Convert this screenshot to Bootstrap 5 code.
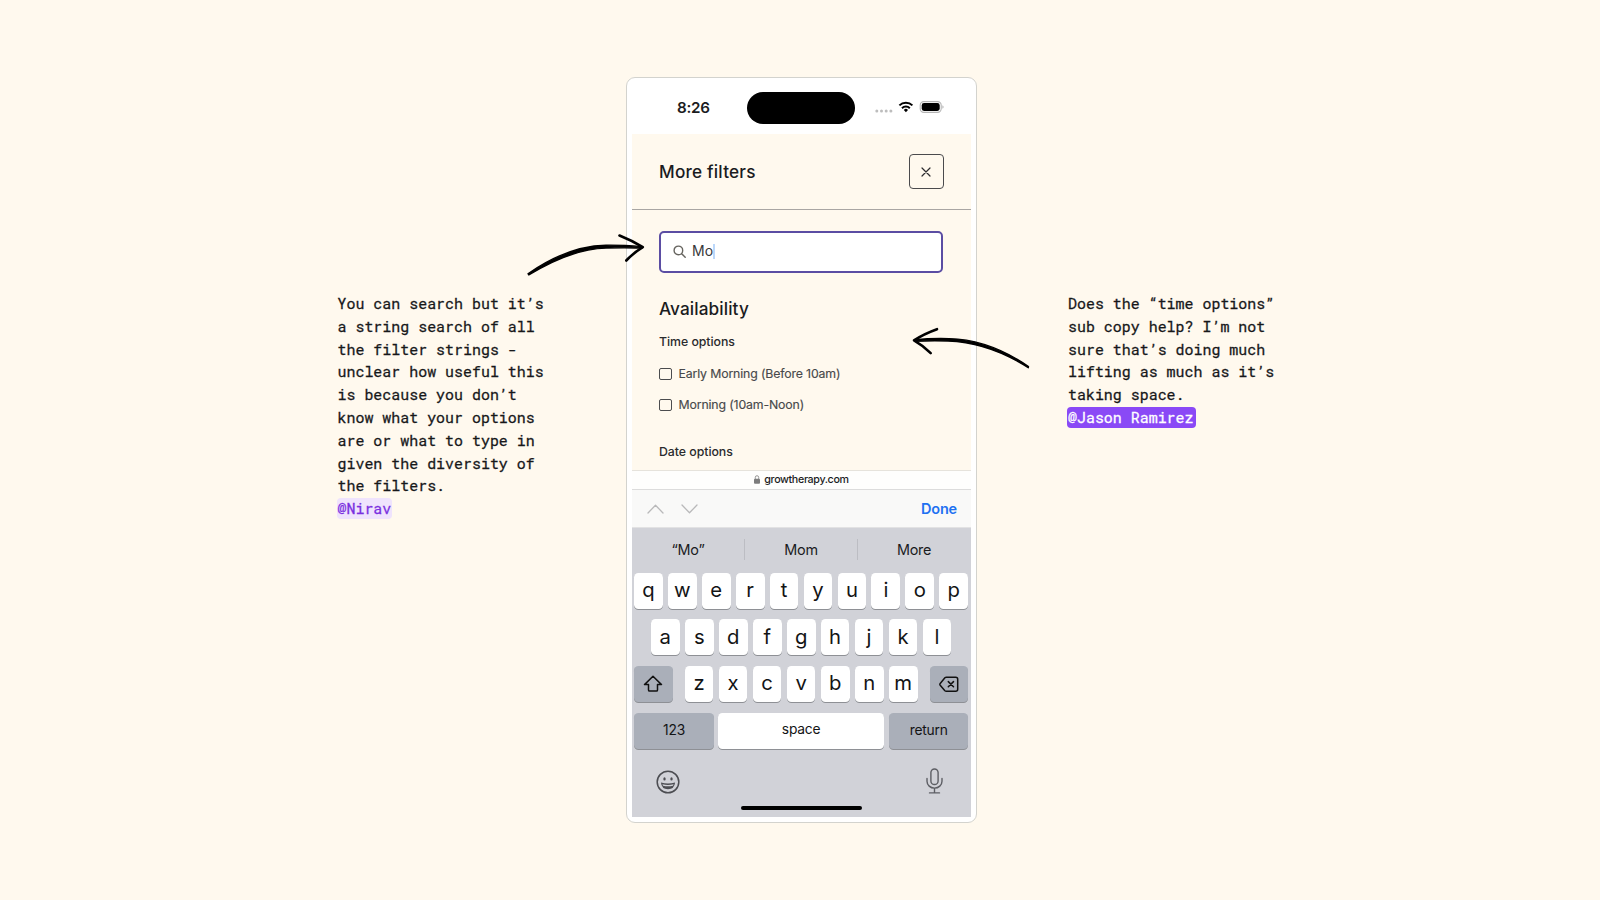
<!DOCTYPE html>
<html lang="en">
<head>
<meta charset="utf-8">
<title>Filter search review</title>
<link href="https://cdn.jsdelivr.net/npm/bootstrap@5.3.0/dist/css/bootstrap.min.css" rel="stylesheet">
<style>
body{background:#fff9ee;font-family:Inter,"Liberation Sans",sans-serif;color:#1b1c1e;width:1600px;height:900px;overflow:hidden}
.board{width:1600px;height:900px;padding-top:77px}
.remark{font:400 14.95px/22.8px "Roboto Mono","DejaVu Sans Mono",monospace;color:#17181a;margin-top:215px;white-space:nowrap;-webkit-text-stroke:.28px}
.remark-left{width:288.5px;margin-left:337.5px}
.remark-right{margin-left:91px}
.tag{border-radius:4px;padding:0 1px 1px;margin-left:-1px}
.tag-soft{background:#efe3fd;color:#7a2fe0}
.tag-solid{background:#8a49f6;color:#fff;padding-right:2px}
.phone{width:351px;height:746px;border:1.5px solid #d3d3ce;border-radius:9px;background:#fff;padding:0 5.5px 4.5px 4.5px}
.status{height:56px}
.clock{font-size:15.2px;font-weight:600;letter-spacing:-.3px;width:115.500px;padding-left:45.500px;padding-top:4px}
.island{width:108px;height:32px;border-radius:16px;background:#000;margin-top:4px}
.sheet{background:#fff9ee;height:336px}
.sheet-head{height:76px;border-bottom:1.5px solid #a9a6a3;padding:0 27px 0 27.5px}
.t-title{font-size:17.2px;font-weight:500;letter-spacing:.2px}
.t-section{letter-spacing:.1px}
.close-btn{width:35px;height:35px;border:1.3px solid #4b4b4d;border-radius:4px}
.sheet-body{padding:21px 27.5px 0}
.search{height:41.5px;border:2px solid #5b4da3;border-radius:5px;background:#fff;padding-left:11.5px}
.t-query{font-size:14px;color:#37383a;margin-left:6.5px;margin-top:-2px}
.caret{width:1.5px;height:15px;background:#bcd8fb}
.line{display:flex;align-items:center;white-space:nowrap}
.row-section{height:72px}
.row-sub{height:33px;margin-top:-19px}
.row-opt{height:31px}
.row-date{height:33px;margin-top:15px}
.t-sub{font-size:12.3px;font-weight:500;letter-spacing:-.03px;color:#2a2b2d}
.t-opt{font-size:12.3px;letter-spacing:-.14px;color:#48494b;margin-left:7px;-webkit-text-stroke:.15px}
.box{width:12.5px;height:12.5px;border:1.6px solid #4b4c4e;border-radius:2px}
.urlbar{height:19.5px;background:#fefefd;border-top:1px solid #e6e3dc;border-bottom:1px solid #dcdcdc;font-size:10.7px;font-weight:500;letter-spacing:-.35px;gap:4px;padding-left:1px}
.accessory{height:38px;background:#f9f9f8;padding:1px 13.5px 0 15px;border-bottom:1px solid #e2e2e3;gap:17px}
.done{font-size:14.5px;font-weight:600;letter-spacing:-.2px;color:#1f72f2}
.keyboard{background:#d1d2d8;height:289px}
.suggest{height:45px;font-size:14.4px;letter-spacing:-.25px}
.suggest>div+div::before{content:"";position:absolute;left:-1px;top:11px;height:21px;border-left:1px solid #bcbdc3}
.keys{padding:0 2.3px 0 2.5px;height:46.7px}
.key{width:28.8px;height:36.3px;border-radius:4.5px;background:#fff;box-shadow:0 1px 0 #8e9095;font-size:20.3px;color:#131415;display:flex;align-items:center;justify-content:center;line-height:1;padding-bottom:1px}
.key-dark{background:#aaafb9;padding-bottom:0}
.key-side{width:38.5px}
.key-text{font-size:13.8px;letter-spacing:-.2px}
.home{width:121px;height:4.5px;border-radius:3px;background:#000}
.sketch{position:absolute;left:0;top:0;pointer-events:none}
</style>
</head>
<body>
<main class="board position-relative d-flex align-items-start">
  <div class="remark remark-left flex-shrink-0">You can search but it’s<br>a string search of all<br>the filter strings -<br>unclear how useful this<br>is because you don’t<br>know what your options<br>are or what to type in<br>given the diversity of<br>the filters.<br><span class="tag tag-soft">@Nirav</span></div>

  <section class="phone flex-shrink-0">
    <div class="status d-flex align-items-center">
      <div class="clock flex-shrink-0">8:26</div>
      <div class="island flex-shrink-0"></div>
      <svg width="70" height="14" viewBox="0 0 70 14" style="margin:2.500px 0 0 19.500px">
        <g fill="#bdbdbd"><circle cx="1.8" cy="11" r="1.5"/><circle cx="6.5" cy="11" r="1.5"/><circle cx="11.2" cy="11" r="1.5"/><circle cx="15.9" cy="11" r="1.5"/></g>
        <g fill="none" stroke="#000" stroke-width="2"><path d="M24.4 5.4a9.2 9.2 0 0 1 13 0"/><path d="M27 8.2a5.6 5.6 0 0 1 7.8 0"/></g>
        <path d="M28.8 9.9a3 3 0 0 1 4.2 0L30.9 12.3z" fill="#000"/>
        <rect x="45.2" y="1.6" width="21" height="10.8" rx="3.6" fill="#fff" stroke="#b5b5b5" stroke-width="1.1"/>
        <rect x="46.7" y="3.1" width="18" height="7.800" rx="2.3" fill="#000"/>
        <path d="M67.4 5.300q1.200.4 1.200 1.700t-1.200 1.700z" fill="#b5b5b5"/>
      </svg>
    </div>

    <div class="sheet">
      <div class="sheet-head d-flex align-items-center justify-content-between">
        <span class="t-title">More filters</span>
        <div class="close-btn d-flex align-items-center justify-content-center"><svg width="10" height="10" viewBox="0 0 10 10" stroke="#2d2d2f" stroke-width="1.2" stroke-linecap="round"><path d="M1 1l8 8M9 1l-8 8"/></svg></div>
      </div>
      <div class="sheet-body">
        <div class="search line"><svg width="13" height="13" viewBox="0 0 13 13" fill="none" stroke="#66645f" stroke-width="1.4" stroke-linecap="round"><circle cx="5.4" cy="5.4" r="4.3"/><path d="M8.7 8.7l3.5 3.5"/></svg><span class="t-query">Mo</span><i class="caret"></i></div>
        <div class="line row-section"><span class="t-title t-section">Availability</span></div>
        <div class="line row-sub"><span class="t-sub">Time options</span></div>
        <div class="line row-opt"><i class="box"></i><span class="t-opt">Early Morning (Before 10am)</span></div>
        <div class="line row-opt"><i class="box"></i><span class="t-opt">Morning (10am-Noon)</span></div>
        <div class="line row-date"><span class="t-sub">Date options</span></div>
      </div>
    </div>

    <div class="urlbar line justify-content-center">
      <svg width="6" height="9" viewBox="0 0 6 9"><rect y="3.8" width="6" height="5" rx="1" fill="#7d7d7d"/><path d="M1.3 4V2.4a1.700 1.700 0 0 1 3.400 0V4" fill="none" stroke="#8b8b8b" stroke-width=".9"/></svg>
      <span>growtherapy.com</span>
    </div>
    <div class="accessory d-flex align-items-center">
      <svg width="17" height="10" viewBox="0 0 17 10" fill="none" stroke="#b9b9ba" stroke-width="1.3" stroke-linecap="round" stroke-linejoin="round"><path d="M1 9l7.500-7.800L16 9"/></svg>
      <svg width="17" height="10" viewBox="0 0 17 10" fill="none" stroke="#b9b9ba" stroke-width="1.3" stroke-linecap="round" stroke-linejoin="round"><path d="M1 1l7.500 7.800L16 1"/></svg>
      <span class="done ms-auto">Done</span>
    </div>

    <div class="keyboard">
      <div class="suggest d-flex text-center">
        <div class="col-4 position-relative d-flex align-items-center justify-content-center">“Mo”</div>
        <div class="col-4 position-relative d-flex align-items-center justify-content-center">Mom</div>
        <div class="col-4 position-relative d-flex align-items-center justify-content-center">More</div>
      </div>
      <div class="keys d-flex justify-content-between"><div class="key">q</div><div class="key">w</div><div class="key">e</div><div class="key">r</div><div class="key">t</div><div class="key">y</div><div class="key">u</div><div class="key">i</div><div class="key">o</div><div class="key">p</div></div>
      <div class="keys d-flex justify-content-between" style="padding:0 19.2px 0 19.4px"><div class="key">a</div><div class="key">s</div><div class="key">d</div><div class="key">f</div><div class="key">g</div><div class="key">h</div><div class="key">j</div><div class="key">k</div><div class="key">l</div></div>
      <div class="keys d-flex justify-content-between">
        <div class="key key-dark key-side"><svg width="20" height="18" viewBox="0 0 20 18" fill="none" stroke="#111" stroke-width="1.5" stroke-linejoin="round"><path d="M10 1.300L1.500 9.600h4v5.300q0 1.100 1.100 1.100h6.800q1.100 0 1.100-1.100V9.600h4z"/></svg></div>
        <div class="d-flex justify-content-between" style="width:233px"><div class="key">z</div><div class="key">x</div><div class="key">c</div><div class="key">v</div><div class="key">b</div><div class="key">n</div><div class="key">m</div></div>
        <div class="key key-dark key-side"><svg width="20" height="17" viewBox="0 0 20 17" fill="none" stroke="#111" stroke-width="1.5" stroke-linejoin="round" stroke-linecap="round"><path d="M7.300 1.200h9.400q2 0 2 2v10.100q0 2-2 2H7.300q-.8 0-1.400-.6L1.200 9.200q-.7-.9 0-1.800l4.700-5.600q.6-.6 1.400-.6z"/><path d="M9.300 5.600l5.200 5.200M14.500 5.600l-5.200 5.200"/></svg></div>
      </div>
      <div class="keys d-flex justify-content-between">
        <div class="key key-dark key-text" style="width:80px;padding-top:1px">123</div>
        <div class="key key-text" style="width:166px;margin-left:-1px">space</div>
        <div class="key key-dark key-text" style="width:79px;padding-top:1px">return</div>
      </div>
      <div class="d-flex justify-content-between align-items-start" style="padding:9px 28px 0 24.5px;height:46.5px">
        <svg width="24" height="24" viewBox="0 0 24 24" style="margin-top:2px"><circle cx="12" cy="12" r="10.8" fill="none" stroke="#4c4d52" stroke-width="1.5"/><ellipse cx="8.500" cy="8.900" rx="1.2" ry="1.6" fill="#4c4d52"/><ellipse cx="15.500" cy="8.900" rx="1.2" ry="1.6" fill="#4c4d52"/><path d="M4.900 12.600q7.100 2 14.200 0-.7 6.700-7.100 6.700t-7.100-6.700z" fill="#4c4d52"/><path d="M6.400 14.300q5.600 1.300 11.200 0l-.6 1.500q-5 1-10 0z" fill="#d1d2d8"/></svg>
        <svg width="17" height="26" viewBox="0 0 17 26" fill="none" stroke="#5d5e64" stroke-width="1.4" stroke-linecap="round"><rect x="4.900" y="1" width="7.200" height="15.500" rx="3.600"/><path d="M1 10.500v2.800a7.500 6.800 0 0 0 15 0v-2.800M8.500 20.200v4.600M3.500 24.900h10"/></svg>
      </div>
      <div class="home mx-auto"></div>
    </div>
  </section>

  <div class="remark remark-right">Does the “time options”<br>sub copy help? I’m not<br>sure that’s doing much<br>lifting as much as it’s<br>taking space.<br><span class="tag tag-solid">@Jason Ramirez</span></div>

  <svg class="sketch" width="1600" height="900" viewBox="0 0 1600 900" fill="#000" stroke="#000" stroke-width="1.4" stroke-linecap="round" stroke-linejoin="round">
    <path d="M528 273.700C552 257 580 245.600 606 245.200C620 245 632 245.800 642 246.600L642 248C630 247.900 620 247.700 606 248.100C582 248.600 556 258.500 528.800 275z"/>
    <path d="M619.500 235.500Q632 240.500 642.800 247.100Q634 252.500 626.300 260.500" fill="none" stroke-width="2.6"/>
    <path d="M1028.300 367.700C1003 351.500 975 341.900 948 341C936 340.600 925 340.800 915 341.200L915 339.700C926 338.600 937 338.300 949 338.600C976 339.200 1004 349.500 1028.500 366.500z"/>
    <path d="M937 329.200Q924 333.800 914 340.400Q923 345.500 930.700 353.200" fill="none" stroke-width="2.6"/>
  </svg>
</main>
<script src="https://cdn.jsdelivr.net/npm/bootstrap@5.3.0/dist/js/bootstrap.bundle.min.js"></script>
</body>
</html>
